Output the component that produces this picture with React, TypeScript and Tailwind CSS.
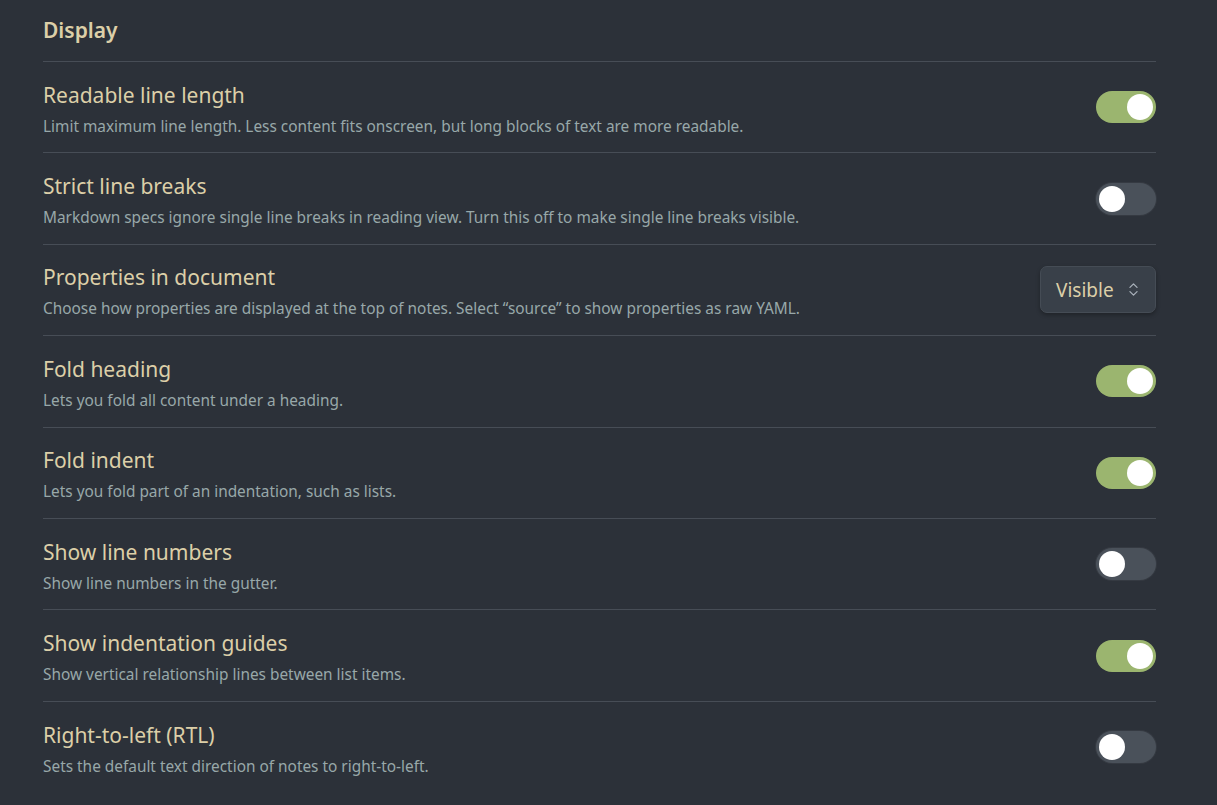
import { useState } from 'react';
import { ChevronsUpDown } from 'lucide-react';

interface Setting {
  id: string;
  title: string;
  desc: string;
  kind: 'toggle' | 'select';
  on?: boolean;
}

const settings: Setting[] = [
  { id: 'readable', title: 'Readable line length', desc: 'Limit maximum line length. Less content fits onscreen, but long blocks of text are more readable.', kind: 'toggle', on: true },
  { id: 'strict', title: 'Strict line breaks', desc: 'Markdown specs ignore single line breaks in reading view. Turn this off to make single line breaks visible.', kind: 'toggle', on: false },
  { id: 'props', title: 'Properties in document', desc: 'Choose how properties are displayed at the top of notes. Select \u201csource\u201d to show properties as raw YAML.', kind: 'select' },
  { id: 'foldHeading', title: 'Fold heading', desc: 'Lets you fold all content under a heading.', kind: 'toggle', on: true },
  { id: 'foldIndent', title: 'Fold indent', desc: 'Lets you fold part of an indentation, such as lists.', kind: 'toggle', on: true },
  { id: 'lineNumbers', title: 'Show line numbers', desc: 'Show line numbers in the gutter.', kind: 'toggle', on: false },
  { id: 'guides', title: 'Show indentation guides', desc: 'Show vertical relationship lines between list items.', kind: 'toggle', on: true },
  { id: 'rtl', title: 'Right-to-left (RTL)', desc: 'Sets the default text direction of notes to right-to-left.', kind: 'toggle', on: false },
];

function Toggle({ on, onClick }: { on: boolean; onClick: () => void }) {
  return (
    <button
      onClick={onClick}
      className={`w-[60px] h-[32px] rounded-full flex items-center px-[3px] transition-colors shrink-0 ${on ? 'bg-[#9bb56f] justify-end' : 'bg-[#4a515a] justify-start shadow-[0_0_0_1px_#353a42]'}`}
    >
      <span className="w-[26px] h-[26px] rounded-full bg-white" />
    </button>
  );
}

export default function App() {
  const [values, setValues] = useState<Record<string, boolean>>(
    Object.fromEntries(settings.map((s) => [s.id, !!s.on]))
  );

  return (
    <div className="min-h-[805px] bg-[#2c3139] font-['Noto_Sans',sans-serif]">
      <div className="ml-[43px] w-[1113px]">
        {/* Heading */}
        <div className="h-[62px] flex items-center border-b border-[#474d56]">
          <h2 className="text-[21px] font-semibold text-[#dccfa8] leading-none -mt-[1px]">Display</h2>
        </div>

        {settings.map((s, i) => (
          <div
            key={s.id}
            className={`h-[91.4px] flex items-center justify-between ${i < settings.length - 1 ? 'border-b border-[#474d56]' : ''}`}
          >
            <div className="flex flex-col gap-[7px] pt-[4px]">
              <div className="text-[21px] leading-[28px] text-[#dccfa8]">{s.title}</div>
              <div className="text-[15.4px] leading-[22px] text-[#98a8a9]">{s.desc}</div>
            </div>
            {s.kind === 'toggle' ? (
              <Toggle on={values[s.id]} onClick={() => setValues((v) => ({ ...v, [s.id]: !v[s.id] }))} />
            ) : (
              <button className="w-[116px] h-[47px] rounded-[7px] bg-[#394049] border border-[#454c55] shadow-[0_2px_4px_rgba(0,0,0,0.3)] flex items-center justify-between pl-[15px] pr-[13px]">
                <span className="text-[19px] text-[#dccfa8]">Visible</span>
                <ChevronsUpDown size={17} strokeWidth={1.8} className="text-[#a9b1ba]" />
              </button>
            )}
          </div>
        ))}
      </div>
    </div>
  );
}
